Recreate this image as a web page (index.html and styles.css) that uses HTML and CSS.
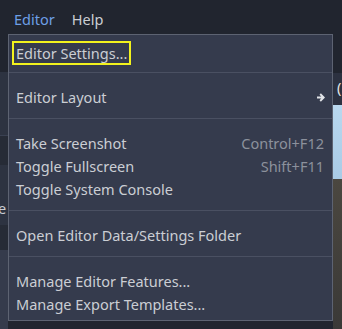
FILE: index.html
```html
<!DOCTYPE html>
<html>
<head>
<meta charset="utf-8">
<link rel="stylesheet" href="styles.css">
</head>
<body>
<div class="app">
  <div class="menubar">
    <span class="menu active">Editor</span>
    <span class="menu">Help</span>
  </div>
  <div class="workspace">
    <div class="leftdock">
      <div class="blk b1"></div>
      <div class="blk b2"></div>
      <div class="blk b3"></div>
      <div class="blk b4"></div>
      <div class="blk b5"><span class="frag">e</span></div>
      <div class="blk b6"></div>
      <div class="blk b7"></div>
    </div>
    <div class="center"></div>
    <div class="viewport">
      <div class="vp-top"></div>
      <div class="vp-bar"><span class="frag">(</span></div>
      <div class="sky"></div>
      <div class="ground"></div>
    </div>
  </div>
</div>

<div class="popup">
  <div class="item"><span class="focus">Editor Settings...</span></div>
  <div class="sep"></div>
  <div class="item"><span>Editor Layout</span>
    <svg class="arrow" width="9" height="11" viewBox="0 0 9 11"><path d="M1 5.5H7.6M4.2 2L7.7 5.5L4.2 9" fill="none" stroke="#e1e3e7" stroke-width="1.9"/></svg>
  </div>
  <div class="sep"></div>
  <div class="item"><span>Take Screenshot</span><span class="sc">Control+F12</span></div>
  <div class="item"><span>Toggle Fullscreen</span><span class="sc">Shift+F11</span></div>
  <div class="item"><span>Toggle System Console</span></div>
  <div class="sep"></div>
  <div class="item"><span>Open Editor Data/Settings Folder</span></div>
  <div class="sep"></div>
  <div class="item"><span>Manage Editor Features...</span></div>
  <div class="item"><span>Manage Export Templates...</span></div>
</div>
</body>
</html>
```
FILE: styles.css
```css
html, body {
  margin: 0;
  padding: 0;
}
body {
  width: 342px;
  height: 329px;
  overflow: hidden;
  background: #21252f;
  font-family: "Noto Sans", "DejaVu Sans", sans-serif;
  font-size: 14.5px;
  color: #cbced4;
  position: relative;
}
.app {
  display: flex;
  flex-direction: column;
  height: 329px;
}
.menubar {
  height: 34px;
  display: flex;
  align-items: center;
  gap: 17px;
  padding-left: 14px;
  padding-top: 4px;
  box-sizing: border-box;
}
.menu {
  color: #cbced4;
}
.menu.active {
  color: #6d9fe6;
}
.workspace {
  flex: 1;
  display: flex;
}
.leftdock {
  width: 8px;
  display: flex;
  flex-direction: column;
  overflow: hidden;
}
.blk { position: relative; }
.b1 { height: 38px; background: #21252f; }
.b2 { height: 63px; background: #2d3341; border-bottom: 1px solid #3a4152; }
.b3 { height: 29px; background: #262b36; }
.b4 { height: 30px; background: #2d3341; }
.b5 { height: 30px; background: #2d3341; color: #c8cbd1; }
.b6 { height: 25px; background: #262b36; }
.b7 { flex: 1; background: #353b4c; }
.frag {
  position: absolute;
  left: -2px;
  top: 3px;
  font-size: 14.5px;
}
.center { flex: 1; background: #21252f; }
.viewport {
  width: 9px;
  display: flex;
  flex-direction: column;
  overflow: hidden;
}
.vp-top { height: 39px; background: #21252f; }
.vp-bar { height: 32px; background: #2c3140; color: #e6e6e6; position: relative; }
.vp-bar .frag { left: 4px; top: 4px; }
.sky { height: 74px; background: linear-gradient(#b9d8ef, #a9cbe6); }
.ground { flex: 1; background: linear-gradient(#4b4740, #3a3937); }

.popup {
  position: absolute;
  left: 8px;
  top: 34px;
  width: 325px;
  height: 287px;
  box-sizing: border-box;
  background: #353b4d;
  border: 1px solid #5d6372;
  padding: 6px 8px 0 7px;
  display: flex;
  flex-direction: column;
}
.item {
  height: 23px;
  box-sizing: border-box;
  padding-bottom: 3px;
  display: flex;
  align-items: center;
  justify-content: space-between;
  white-space: nowrap;
  line-height: 20px;
}
.focus {
  margin-left: -4px;
  margin-top: 3px;
  padding: 0 2px;
  border: 2px solid #f2f21d;
  line-height: 20px;
  height: 20px;
}
.sep {
  height: 23px;
  position: relative;
  margin: 0 -8px 0 -7px;
}
.sep::after {
  content: "";
  position: absolute;
  left: 0;
  right: 0;
  top: 8px;
  height: 1px;
  background: #4a5062;
}
.sc {
  color: #8c919c;
}
.arrow {
  margin-right: -1px;
}
```
